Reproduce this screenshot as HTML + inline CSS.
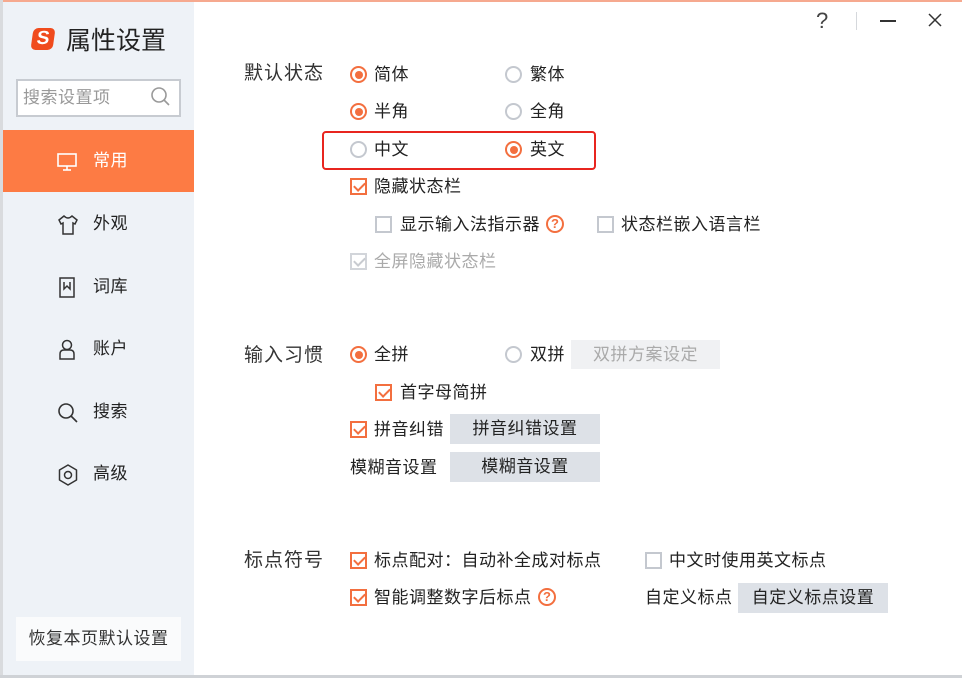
<!DOCTYPE html>
<html><head><meta charset="utf-8"><style>
*{margin:0;padding:0;box-sizing:border-box}
body{width:962px;height:678px;background:#fff;position:relative;overflow:hidden;font-family:"Liberation Sans","Noto Sans CJK SC",sans-serif;color:#222}
.a{position:absolute;white-space:nowrap}
.t{font-size:17px;line-height:22px;letter-spacing:0.5px}
.sec{font-size:19px;line-height:24px;color:#333;letter-spacing:1px}
.r{position:absolute;width:17px;height:17px;border-radius:50%;border:2px solid #c4c8cf;background:#fff}
.r.on{border-color:#f36f3f}
.r.on::after{content:"";position:absolute;left:2.5px;top:2.5px;width:8px;height:8px;border-radius:50%;background:#f36f3f}
.c{position:absolute;width:17px;height:17px;border:2px solid #c4c8cf;background:#fff}
.c.on{border-color:#f36f3f}
.c.on::after{content:"";position:absolute;left:4px;top:0px;width:5px;height:9px;border:solid #f36f3f;border-width:0 2px 2px 0;transform:rotate(45deg)}
.c.dis{border-color:#d2d5da}
.c.dis::after{content:"";position:absolute;left:4px;top:0px;width:5px;height:9px;border:solid #c8cbd0;border-width:0 2px 2px 0;transform:rotate(45deg)}
.btn{position:absolute;background:#dde1e7;font-size:17px;letter-spacing:0.5px;text-align:center;color:#222}
.q{position:absolute;width:18px;height:18px;border:2px solid #f36f3f;border-radius:50%;color:#f36f3f;font-size:13px;font-weight:bold;line-height:14px;text-align:center}
.nav{position:absolute;left:3px;width:191px;height:62px}
.nav span{position:absolute;left:90px;top:20px;font-size:17px;line-height:22px;color:#222;letter-spacing:0.5px}
.nav svg{position:absolute;left:53px;top:20px}
</style></head><body>
<div class="a" style="left:0;top:0;width:962px;height:2px;background:#f6a98f"></div>
<div class="a" style="left:0;top:0;width:3px;height:678px;background:#d9dbde"></div>
<div class="a" style="left:0;top:675px;width:962px;height:3px;background:#cfd2d6"></div>
<div class="a" style="left:3px;top:2px;width:191px;height:673px;background:#eef2f7"></div>

<div class="a" style="left:32px;top:28px;width:22px;height:22px;background:#f04b1d;border-radius:5px;transform:skewX(-8deg);color:#fff;font-weight:bold;font-size:19px;line-height:22px;text-align:center">S</div>
<div class="a" style="left:66px;top:25px;font-size:25px;line-height:32px;color:#222">属性设置</div>

<div class="a" style="left:16px;top:79px;width:165px;height:38px;border:2px solid #c7cbd1;background:#fff"></div>
<div class="a" style="left:23px;top:87px;font-size:17px;line-height:22px;color:#999;letter-spacing:0.5px">搜索设置项</div>
<svg class="a" style="left:150px;top:86px" width="22" height="22" viewBox="0 0 22 22"><circle cx="9" cy="9" r="7" fill="none" stroke="#999" stroke-width="1.6"/><line x1="14" y1="14" x2="19" y2="19" stroke="#999" stroke-width="1.6"/></svg>

<div class="nav" style="top:130px;background:#fd7b44"><svg width="22" height="22" viewBox="0 0 22 22"><rect x="2" y="4" width="18" height="12" fill="none" stroke="#fff" stroke-width="1.6"/><line x1="11" y1="16" x2="11" y2="20" stroke="#fff" stroke-width="1.6"/><line x1="7" y1="20" x2="15" y2="20" stroke="#fff" stroke-width="1.6"/></svg><span style="color:#fff">常用</span></div>
<div class="nav" style="top:193px"><svg width="24" height="24" viewBox="0 0 24 24"><path d="M8 3 L3 7 L5 11 L7 10 L7 21 L17 21 L17 10 L19 11 L21 7 L16 3 Q12 7 8 3Z" fill="none" stroke="#333" stroke-width="1.5"/></svg><span>外观</span></div>
<div class="nav" style="top:256px"><svg width="22" height="24" viewBox="0 0 22 24"><path d="M4 2 H18 V21 H4 Z M8 6 V13 L11 10 L14 13 V6" fill="none" stroke="#333" stroke-width="1.5"/></svg><span>词库</span></div>
<div class="nav" style="top:318px"><svg width="22" height="24" viewBox="0 0 22 24"><circle cx="11" cy="7" r="4.5" fill="none" stroke="#333" stroke-width="1.5"/><path d="M4 21 V16 Q4 12 8 12 H14 Q18 12 18 16 V21 Z" fill="none" stroke="#333" stroke-width="1.5"/></svg><span>账户</span></div>
<div class="nav" style="top:381px"><svg width="24" height="24" viewBox="0 0 24 24"><circle cx="10" cy="10" r="7" fill="none" stroke="#333" stroke-width="1.6"/><line x1="15" y1="15" x2="21" y2="21" stroke="#333" stroke-width="1.6"/></svg><span>搜索</span></div>
<div class="nav" style="top:443px"><svg width="24" height="24" viewBox="0 0 24 24"><path d="M12 2 L20.5 7 V17 L12 22 L3.5 17 V7 Z" fill="none" stroke="#333" stroke-width="1.5" stroke-linejoin="round"/><circle cx="12" cy="12" r="3.5" fill="none" stroke="#333" stroke-width="1.5"/></svg><span>高级</span></div>

<div class="a" style="left:16px;top:617px;width:165px;height:44px;background:#fafbfc;font-size:17px;letter-spacing:0.5px;line-height:44px;text-align:center;color:#333">恢复本页默认设置</div>

<div class="a" style="left:816px;top:8px;font-size:22px;line-height:26px;color:#444">?</div>
<div class="a" style="left:856px;top:12px;width:1px;height:18px;background:#d5d8dc"></div>
<div class="a" style="left:880px;top:20px;width:16px;height:1.5px;background:#333"></div>
<svg class="a" style="left:928px;top:13px" width="14" height="14"><path d="M1 1 L13 13 M13 1 L1 13" stroke="#333" stroke-width="1.5"/></svg>

<div class="a sec" style="left:244px;top:62px">默认状态</div>
<div class="r on" style="left:350px;top:66px"></div><div class="a t" style="left:374px;top:64px">简体</div>
<div class="r" style="left:505px;top:66px"></div><div class="a t" style="left:530px;top:64px">繁体</div>
<div class="r on" style="left:350px;top:103px"></div><div class="a t" style="left:374px;top:101px">半角</div>
<div class="r" style="left:505px;top:103px"></div><div class="a t" style="left:530px;top:101px">全角</div>
<div class="a" style="left:322px;top:131px;width:274px;height:39px;border:2px solid #e8251f;border-radius:4px"></div>
<div class="r" style="left:350px;top:141px"></div><div class="a t" style="left:374px;top:139px">中文</div>
<div class="r on" style="left:505px;top:141px"></div><div class="a t" style="left:530px;top:139px">英文</div>
<div class="c on" style="left:350px;top:178px"></div><div class="a t" style="left:374px;top:176px">隐藏状态栏</div>
<div class="c" style="left:375px;top:216px"></div><div class="a t" style="left:400px;top:214px">显示输入法指示器</div>
<div class="q" style="left:546px;top:215px">?</div>
<div class="c" style="left:597px;top:216px"></div><div class="a t" style="left:621px;top:214px">状态栏嵌入语言栏</div>
<div class="c dis" style="left:350px;top:253px"></div><div class="a t" style="left:374px;top:251px;color:#aaa">全屏隐藏状态栏</div>

<div class="a sec" style="left:244px;top:344px">输入习惯</div>
<div class="r on" style="left:350px;top:346px"></div><div class="a t" style="left:374px;top:344px">全拼</div>
<div class="r" style="left:505px;top:346px"></div><div class="a t" style="left:530px;top:344px">双拼</div>
<div class="btn" style="left:571px;top:340px;width:149px;height:29px;line-height:29px;background:#f0f1f3;color:#aaa">双拼方案设定</div>
<div class="c on" style="left:375px;top:384px"></div><div class="a t" style="left:400px;top:382px">首字母简拼</div>
<div class="c on" style="left:350px;top:421px"></div><div class="a t" style="left:374px;top:419px">拼音纠错</div>
<div class="btn" style="left:450px;top:414px;width:150px;height:30px;line-height:30px">拼音纠错设置</div>
<div class="a t" style="left:350px;top:457px">模糊音设置</div>
<div class="btn" style="left:450px;top:452px;width:150px;height:30px;line-height:30px">模糊音设置</div>

<div class="a sec" style="left:244px;top:549px">标点符号</div>
<div class="c on" style="left:350px;top:552px"></div><div class="a t" style="left:374px;top:550px">标点配对：自动补全成对标点</div>
<div class="c" style="left:645px;top:552px"></div><div class="a t" style="left:669px;top:550px">中文时使用英文标点</div>
<div class="c on" style="left:350px;top:589px"></div><div class="a t" style="left:374px;top:587px">智能调整数字后标点</div>
<div class="q" style="left:538px;top:588px">?</div>
<div class="a t" style="left:645px;top:587px">自定义标点</div>
<div class="btn" style="left:738px;top:583px;width:150px;height:30px;line-height:30px">自定义标点设置</div>
</body></html>
